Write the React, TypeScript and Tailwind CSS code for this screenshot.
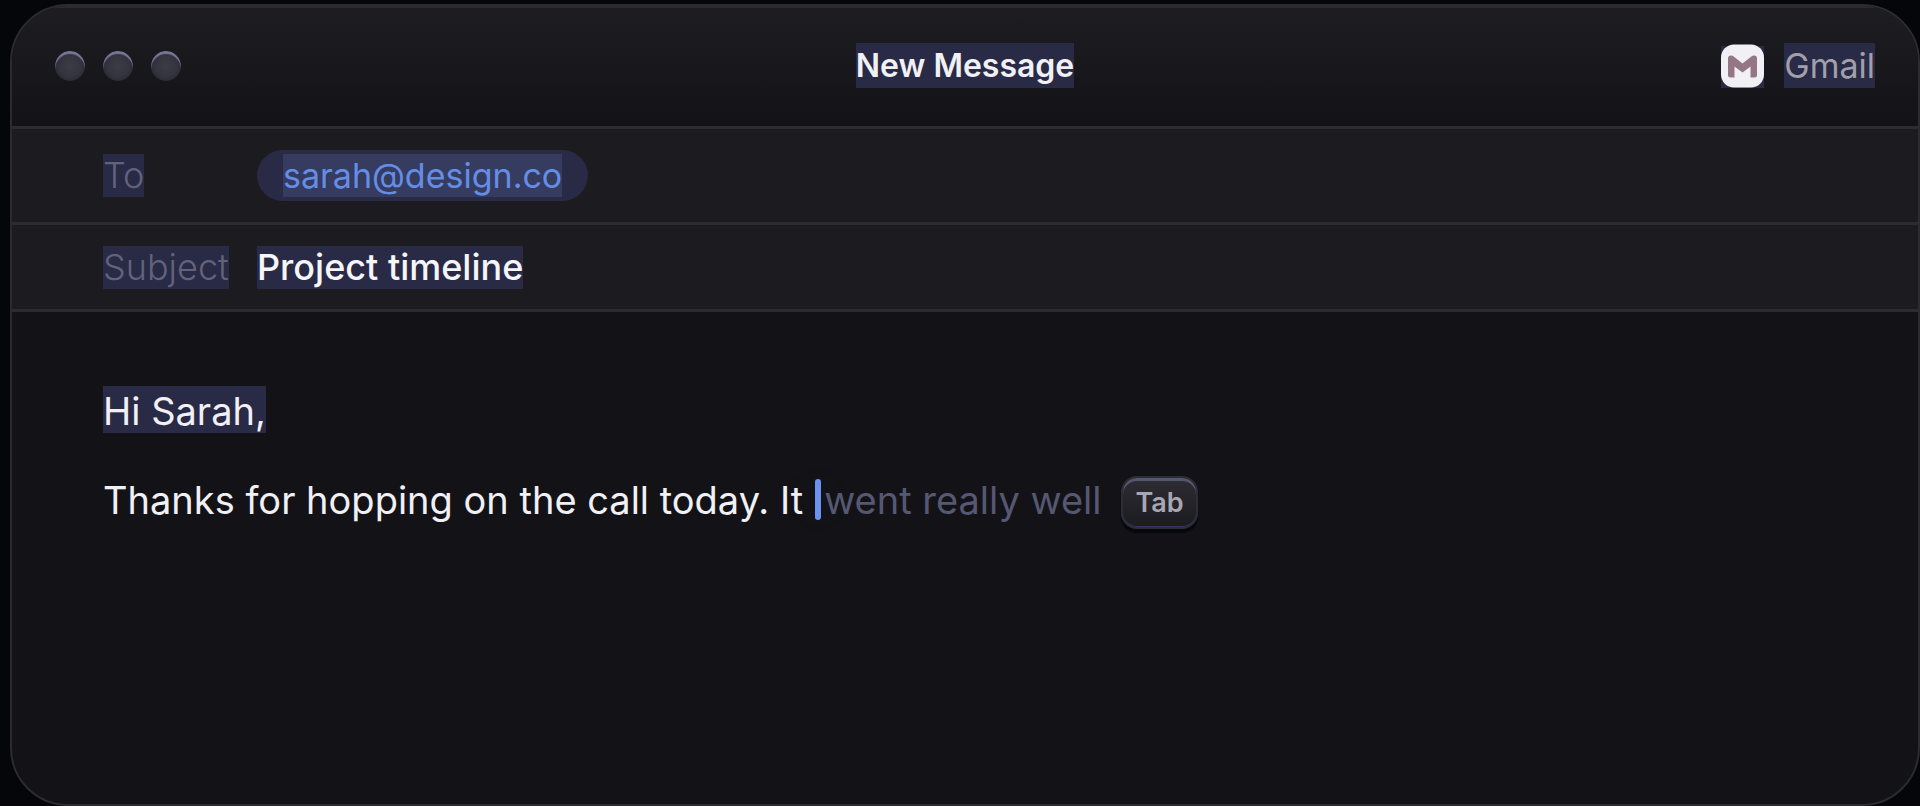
import type { ReactNode } from "react";

function Highlight({ children, className = "bg-[#292a45]" }: { children: ReactNode; className?: string }) {
  return <span className={`inline-block whitespace-nowrap ${className}`}>{children}</span>;
}

function WindowButton({ label }: { label: string }) {
  return (
    <button
      type="button"
      aria-label={label}
      className="size-[30px] rounded-full bg-[#2d2e3a] bg-[radial-gradient(circle_at_50%_50%,#3c3c45_0%,#33343e_50%,#2a2b38_75%)] shadow-[inset_0_3px_1px_#77779a]"
    />
  );
}

function MailIcon() {
  return (
    <svg viewBox="0 0 44 44" className="size-11" aria-hidden="true">
      <rect x="1" y="2" width="43" height="42" fill="#292a45" />
      <rect x="1" y="0.5" width="43" height="43" rx="13" fill="#f0f0f5" />
      <path
        d="M8 14.5 Q8 11.5 11 11.5 Q12.5 11.5 14 12.7 L22.5 19.5 L31 12.7 Q32.5 11.5 34 11.5 Q37 11.5 37 14.5 V31 Q37 33.5 34.5 33.5 H30.5 V22.5 L22.5 28.5 L14.5 22.5 V33.5 H10.5 Q8 33.5 8 31 Z"
        fill="#957783"
      />
    </svg>
  );
}

export default function App() {
  return (
    <div className="flex min-h-screen bg-[#050609] pl-[10px] pt-1 font-['Inter',sans-serif]">
      <main className="flex flex-1 flex-col overflow-hidden rounded-[58px] border-2 border-[#2b2b30] bg-[#131317]">
        <header className="grid grid-cols-[1fr_auto_1fr] items-center border-b-[3px] border-[#2b2b30] bg-linear-to-b from-[#1e1e22] to-[#131317] px-[43px] pb-[38px] pt-[37px] shadow-[inset_0_2px_0_#2b2b30]">
          <div className="flex gap-[18px]">
            <WindowButton label="Close" />
            <WindowButton label="Minimize" />
            <WindowButton label="Zoom" />
          </div>
          <h1 className="text-[32px] font-semibold leading-[45px] text-[#f0f0f5]">
            <Highlight>New Message</Highlight>
          </h1>
          <div className="flex items-center justify-end gap-[20px] text-[34px] leading-[45px] text-[#a09fab]">
            <MailIcon />
            <Highlight>Gmail</Highlight>
          </div>
        </header>

        <section className="bg-[#1c1c20] text-[36px] leading-[43px]">
          <div className="flex items-center border-b-[3px] border-[#2b2b30] px-[91px] py-[21px]">
            <div className="w-[154px] font-light text-[#62637a]">
              <Highlight>To</Highlight>
            </div>
            <div className="rounded-full bg-[#292a45] px-[26px] py-1 text-[34px] text-[#668de6]">
              <Highlight className="bg-[#353c60]">sarah@design.co</Highlight>
            </div>
          </div>
          <div className="flex items-center border-b-[3px] border-[#2b2b30] px-[91px] pb-5 pt-[21px]">
            <label htmlFor="subject" className="w-[154px] font-light text-[#62637a]">
              <Highlight>Subject</Highlight>
            </label>
            <input
              id="subject"
              type="text"
              defaultValue="Project timeline"
              className="field-sizing-content h-[43px] bg-[#292a45] font-medium text-[#f5f5fa] outline-none"
            />
          </div>
        </section>

        <section className="px-[91px] pt-[74px] text-[38px] leading-[44px] text-[#f0f0f5]">
          <p>
            <Highlight className="bg-[#292a45] pt-[3px]">Hi Sarah,</Highlight>
          </p>
          <p className="mt-[43px] flex items-center">
            <span className="flex items-center pb-[6px]">
              <span>Thanks for hopping on the call today. It</span>
              <span className="ml-3 h-[41px] w-[6px] rounded-full bg-[#6b93ee] shadow-[0_0_60px_#6b93ee20]" />
              <span className="ml-[3px] text-[#565873]">went really well</span>
            </span>
            <button
              type="button"
              className="ml-5 h-[53px] rounded-2xl border-2 border-[#2d2d36] bg-linear-to-b from-[#2d2d33] to-[#1b1b20] px-3 text-[27px] font-semibold leading-[45px] text-[#a9a6b4] shadow-[inset_0_3px_0_#55566f,inset_0_-1px_0_#343960,0_4px_1px_#07080b]"
            >
              Tab
            </button>
          </p>
        </section>
      </main>
    </div>
  );
}
